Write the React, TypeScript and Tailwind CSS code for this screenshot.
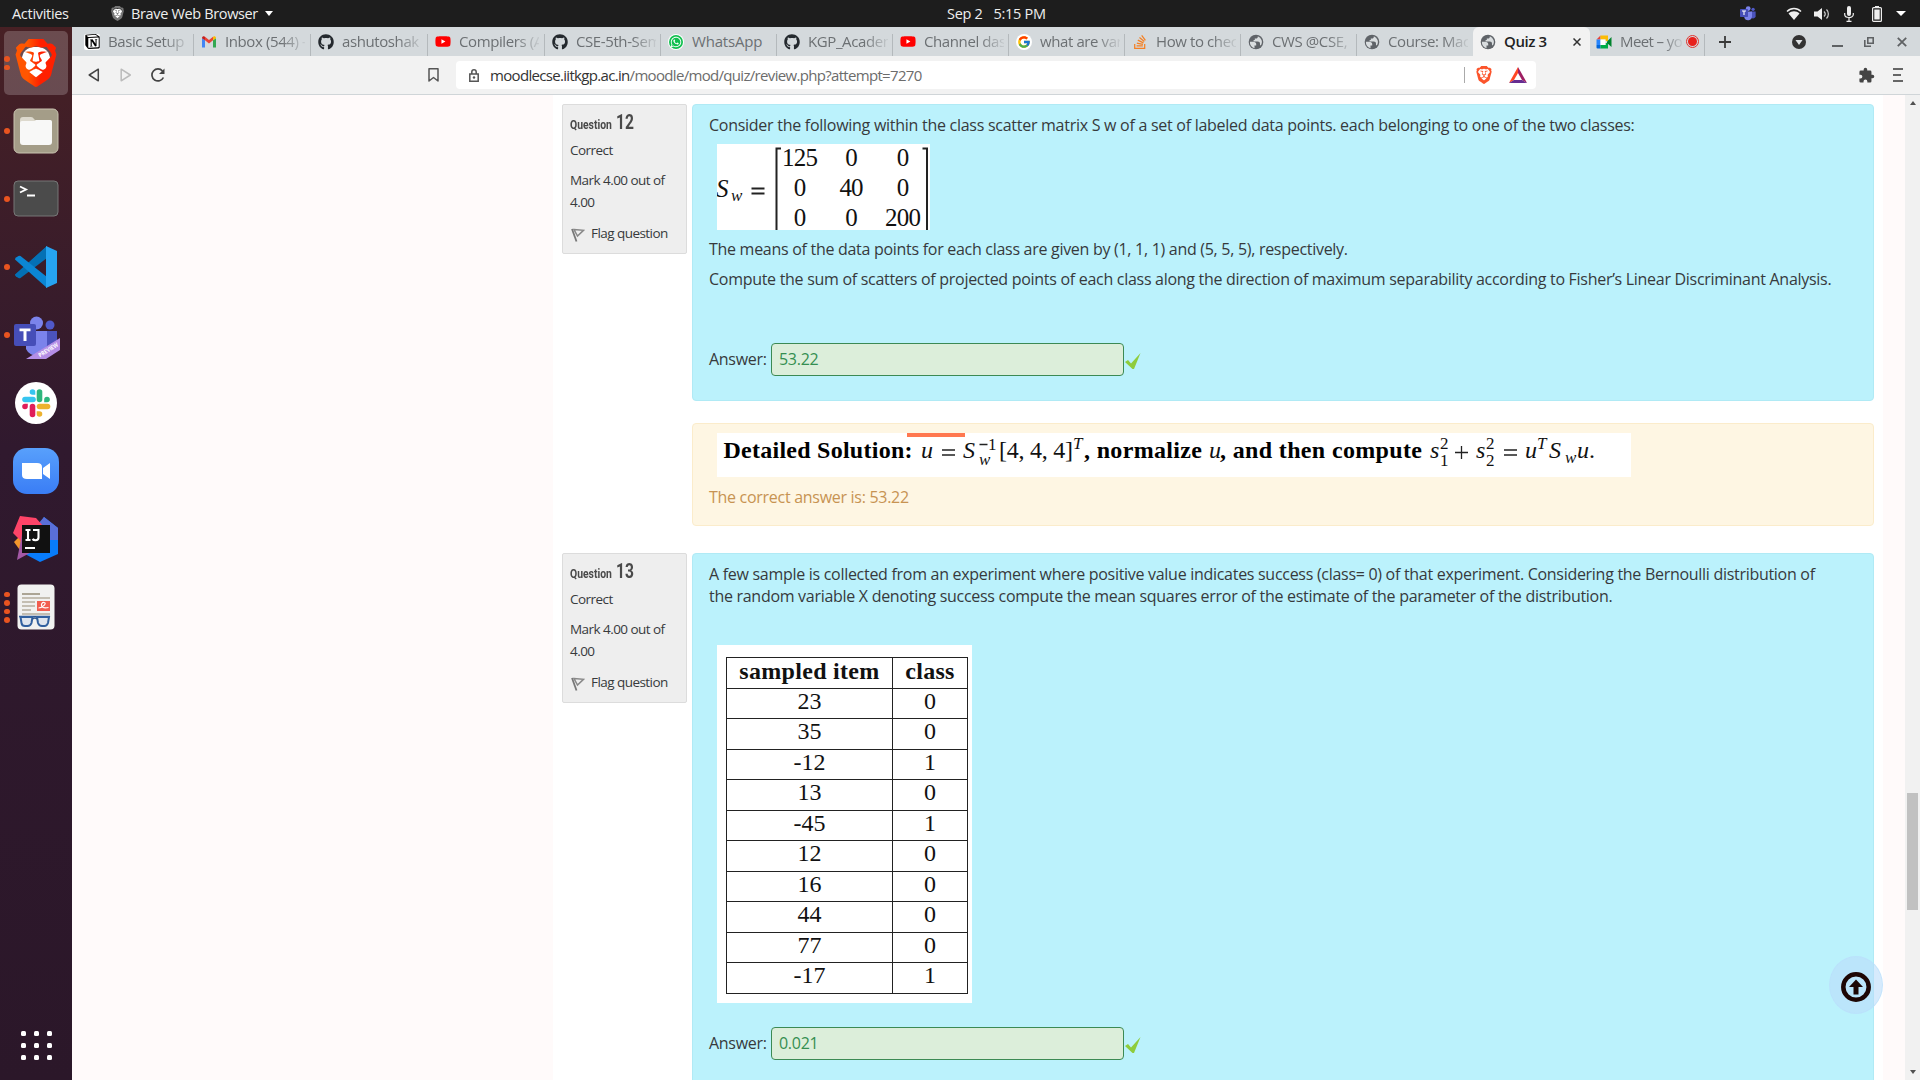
import React from "react";
import { SiBrave, SiNotion } from "react-icons/si";
import { FaGithub, FaYoutube, FaWhatsapp, FaStackOverflow } from "react-icons/fa";
import { FcGoogle } from "react-icons/fc";

const UI = "font-['Open_Sans','Noto_Sans',sans-serif]";

/* ---------- small icons ---------- */

function Globe() {
  return (
    <svg viewBox="0 0 16 16" className="size-4 shrink-0">
      <circle cx="8" cy="8" r="7.300" fill="#5f6368" />
      <path d="M1.900 7.800h3.300c1.800 0 3 .900 3 2.300v1.300H6.500v2.800A6.300 6.300 0 011.900 7.800z" fill="#d9dddf" />
      <path d="M9.800 2.200v.900c0 .900-.700 1.500-1.600 1.500H6.800v1.500H5.600v1.400h4.200c1.300 0 2.200.900 2.200 2.200v1.500h1a6.200 6.200 0 00-3.200-9z" fill="#d9dddf" />
    </svg>
  );
}

function Gmail() {
  return (
    <svg viewBox="0 0 16 16" className="size-4">
      <path d="M1 13.500V4l3 2.300v7.200z" fill="#4285f4" />
      <path d="M12 13.500V6.300L15 4v9.500z" fill="#34a853" />
      <path d="M4 6.300V2.800L8 6l4-3.200v3.500L8 9.500z" fill="#ea4335" />
      <path d="M1 4.200C1 2.300 3 1.800 4 2.800v3.500z" fill="#c5221f" />
      <path d="M15 4.200c0-1.900-2-2.400-3-1.400v3.500z" fill="#fbbc04" />
    </svg>
  );
}

function YouTube() {
  return (
    <span className="relative flex size-4 items-center justify-center">
      <span className="absolute size-1.5 bg-white" />
      <FaYoutube className="relative size-[17px] text-[#f00]" />
    </span>
  );
}

function WhatsApp() {
  return (
    <span className="flex size-4 items-center justify-center rounded-full bg-white">
      <span className="flex size-3.5 items-center justify-center rounded-full bg-[#10bf4f]">
        <FaWhatsapp className="size-3 text-white" />
      </span>
    </span>
  );
}

function Google() {
  return (
    <span className="flex size-4 items-center justify-center rounded-full bg-white">
      <FcGoogle className="size-[14px]" />
    </span>
  );
}

function Meet() {
  return (
    <svg viewBox="0 0 16 16" className="size-4 shrink-0">
      <path d="M.500 5.500l4-4v4z" fill="#ea4335" />
      <path d="M4.500 1.500H12v5.500H9.500V5.500h-5z" fill="#fbbc04" />
      <path d="M.500 5.500h4v5.500h-4z" fill="#2684fc" />
      <path d="M.500 11h4v3.500h-3a1 1 0 01-1-1z" fill="#0066da" />
      <path d="M4.500 14.500V11h5V9H12v5.500z" fill="#00ac47" />
      <path d="M11 7.500l4.500-4.500v10L11 9z" fill="#00832d" />
      <path d="M4.500 5.500h5V11h-5z" fill="#fff" />
    </svg>
  );
}

function Teams({ className }: { className: string }) {
  return (
    <svg viewBox="0 0 44 44" className={className}>
      <circle cx="36" cy="9" r="4.500" fill="#5059c9" />
      <path d="M31 15h12v13a7 7 0 01-12 4z" fill="#4b53bc" />
      <circle cx="22.500" cy="7" r="6.500" fill="#7b83eb" />
      <path d="M12 15h21v14a11 11 0 01-21 4z" fill="#7b83eb" />
      <rect x="0" y="8" width="22" height="22" rx="2" fill="#464eb8" />
      <path d="M5.500 12.500h11v2.800h-4V25H9.500v-9.700h-4z" fill="#fff" />
    </svg>
  );
}

/* ---------- system bar ---------- */

function TopBar() {
  return (
    <header className={`flex h-[27px] shrink-0 items-center bg-[#1d1d1d] text-[14.500px] text-[#eee] ${UI}`}>
      <span className="w-[98px] pl-3 tracking-[-0.3px] whitespace-nowrap">Activities</span>
      <span className="relative mr-[6px] ml-3 flex">
        <span className="absolute inset-x-[3px] top-[3px] h-[9px] rounded-[3px] bg-white" />
        <SiBrave className="relative size-[15px] text-[#777]" />
      </span>
      <span className="w-[134px] tracking-[-0.35px] whitespace-nowrap">Brave Web Browser</span>
      <span className="h-0 w-0 border-x-[4.500px] border-t-[5px] border-x-transparent border-t-white" />
      <span className="ml-[674px] tracking-[-0.3px]">Sep 2</span>
      <span className="ml-[11px] tracking-[-0.3px]">5:15 PM</span>
      <span className="ml-auto flex items-center pr-[14px]">
        <Teams className="mr-[30px] size-4" />
        <svg viewBox="0 0 16 14" className="mr-3 h-[14px] w-4">
          <path d="M1 4.500C5 .500 11 .500 15 4.500" fill="none" stroke="#eee" strokeWidth="1.500" />
          <path d="M2.500 6.500C5.500 3.500 10.500 3.500 13.500 6.500L8 13z" fill="#eee" />
        </svg>
        <svg viewBox="0 0 16 14" className="mr-[14px] h-[14px] w-4">
          <path d="M0 4.500h3.500L8 1v12L3.500 9.500H0z" fill="#eee" />
          <path d="M10 4.500c1.500 1.500 1.500 3.500 0 5M12.500 2.500c2.500 2.500 2.500 6.500 0 9" fill="none" stroke="#ccc" strokeWidth="1.200" />
        </svg>
        <svg viewBox="0 0 10 16" className="mr-[18px] h-4 w-[10px]">
          <rect x="3" y="0" width="4" height="10" rx="2" fill="#eee" />
          <path d="M.700 7v1.500c0 4 8.600 4 8.600 0V7M5 12v3M2.500 15.300h5" fill="none" stroke="#eee" strokeWidth="1.200" />
        </svg>
        <svg viewBox="0 0 10 16" className="mr-[14px] h-4 w-[10px]">
          <rect x="3" y="0" width="4" height="2" fill="#eee" />
          <rect x=".600" y="1.600" width="8.800" height="13.800" rx="1" fill="none" stroke="#eee" strokeWidth="1.200" />
          <rect x="2.300" y="3.500" width="5.400" height="10" fill="#eee" />
        </svg>
        <span className="h-0 w-0 border-x-[5px] border-t-[5px] border-x-transparent border-t-white" />
      </span>
    </header>
  );
}

/* ---------- dock ---------- */

function DockItem({ dots = 0, active = false, children }: { dots?: number; active?: boolean; children: React.ReactNode }) {
  return (
    <div className="relative flex h-[68px] w-[72px] shrink-0 items-center justify-center">
      {active && <span className="absolute inset-x-1 inset-y-0.5 rounded-[5px] bg-white/20" />}
      <span className="absolute left-1 flex h-full flex-col items-center justify-center gap-[3px]">
        {Array.from({ length: dots }, (_, i) => (
          <span key={i} className="size-[5.500px] rounded-full bg-[#e95420]" />
        ))}
      </span>
      <span className="relative flex">{children}</span>
    </div>
  );
}

function Dock() {
  return (
    <nav className="flex w-[72px] shrink-0 flex-col bg-linear-to-b from-[#472024] via-[#30192e] via-40% to-[#2b1729] pt-0.5">
      <DockItem dots={2} active>
        <span className="absolute inset-x-2.5 top-2 h-[34px] rounded-[12px] bg-white" />
        <svg width="0" height="0" className="absolute">
          <defs>
            <linearGradient id="lion" x1="0" x2="1" y1="0" y2="0">
              <stop offset="0.3" stopColor="#ff5601" />
              <stop offset="0.6" stopColor="#ff2000" />
            </linearGradient>
          </defs>
        </svg>
        <SiBrave className="relative size-12 [&_path]:fill-[url(#lion)]" />
      </DockItem>
      <DockItem dots={1}>
        <svg viewBox="0 0 46 46" className="size-[46px]">
          <rect x="1" y="1" width="44" height="44" rx="5" fill="#a49d88" stroke="#c9c3b0" />
          <path d="M7 12q0-3 3-3h8q2 0 3 2l1 1h14q3 0 3 3v7H7z" fill="#ddd9cd" />
          <path d="M7 15q0-2 2-2h13l1-1h14q2 0 2 2v20q0 3-3 3H10q-3 0-3-3z" fill="#f8f8f7" />
        </svg>
      </DockItem>
      <DockItem dots={1}>
        <svg viewBox="0 0 46 38" className="h-[38px] w-[46px]">
          <rect x="1" y="1" width="44" height="35" rx="4" fill="#4b4b4b" stroke="#777" />
          <path d="M7 6.500l6 3-6 3M14 15.500h8" fill="none" stroke="#fff" strokeWidth="1.900" />
        </svg>
      </DockItem>
      <DockItem dots={1}>
        <svg viewBox="0 0 42 42" className="size-[42px]">
          <path d="M0 29L4 32 32 11V0z" fill="#0065a9" />
          <path d="M0 28.500q0 1 1 2L3.500 32q1 .500 2 0L32 12V0z" fill="#0470b5" />
          <path d="M0 13.500q0-1 1-2L3.500 10q1-.500 2 0L32 31v11z" fill="#0b86d4" />
          <path d="M31 0l11 5v32l-11 5z" fill="#26a4f2" />
        </svg>
      </DockItem>
      <DockItem dots={1}>
        <span className="relative top-[3px] flex">
          <Teams className="size-11" />
          <svg viewBox="0 0 34 21" className="absolute top-[22px] left-3 h-[21px] w-[34px]">
            <path d="M0 21L34 0v12L20 21z" fill="#b48ee6" />
            <text x="14" y="19.500" transform="rotate(-32 14 19.500)" fontSize="6" fontWeight="700" fill="#fff" fontFamily="Open Sans" textLength="22" lengthAdjust="spacingAndGlyphs">
              PREVIEW
            </text>
          </svg>
        </span>
      </DockItem>
      <DockItem>
        <svg viewBox="0 0 42 42" className="size-[42px]">
          <circle cx="21" cy="21" r="21" fill="#fff" />
          <g strokeWidth="5.600" strokeLinecap="round">
            <path d="M10 17.500h8" stroke="#36c5f0" />
            <path d="M24.500 10v7.500" stroke="#2eb67d" />
            <path d="M24.500 24.500h8" stroke="#ecb22e" />
            <path d="M17.500 24.500v8" stroke="#e01e5a" />
          </g>
          <path d="M20.300 12.800V10a2.800 2.800 0 10-2.800 2.800z" fill="#36c5f0" />
          <path d="M29.200 20.300H32a2.800 2.800 0 10-2.800-2.800z" fill="#2eb67d" />
          <path d="M21.700 29.200V32a2.800 2.800 0 102.800-2.800z" fill="#ecb22e" />
          <path d="M12.800 21.700H10a2.800 2.800 0 102.800 2.800z" fill="#e01e5a" />
        </svg>
      </DockItem>
      <DockItem>
        <svg viewBox="0 0 46 46" className="size-[46px]">
          <defs>
            <linearGradient id="cam" x1="0" x2="0" y1="0" y2="1">
              <stop offset="0" stopColor="#58a0fc" />
              <stop offset="1" stopColor="#3a7df5" />
            </linearGradient>
          </defs>
          <rect width="46" height="46" rx="14" fill="url(#cam)" />
          <path d="M9 15h15q5 0 5 4v12H14q-5 0-5-4zM30 20l7-5v16l-7-5z" fill="#fff" />
        </svg>
      </DockItem>
      <DockItem>
        <svg viewBox="0 0 46 46" className="size-[46px]">
          <path d="M1 26l8 11 10-12-8-9z" fill="#f3962c" />
          <path d="M27 7l4-6 14 11v26L27 46 12 38z" fill="#087cfa" />
          <path d="M25 8l6-7 14 11v12L27 24z" fill="#5a6fd8" />
          <path d="M0 17L7 0l16 2 8 9-8 14-11-3-2 5z" fill="#fe4468" />
          <path d="M4 44l5-26 15 15z" fill="#a358a5" />
          <rect x="9" y="9" width="28" height="28" fill="#111" />
          <path d="M12.500 14h5M12.500 24h5M15 14v10M20 14h5.500v7.500q0 2.700-3 2.700-2 0-3-1.200" fill="none" stroke="#fff" strokeWidth="2.100" />
          <path d="M12 31h10v2H12z" fill="#fff" />
        </svg>
      </DockItem>
      <DockItem dots={4}>
        <svg viewBox="0 0 38 46" className="h-[46px] w-[38px]">
          <rect x=".500" y=".500" width="37" height="45" rx="4" fill="#f1f1f0" />
          <path d="M5 10h18" stroke="#aca595" strokeWidth="2" />
          <path d="M5 14h28M5 18h13M5 22h13M5 26h9M5 30h28" stroke="#c4beb2" strokeWidth="2" />
          <rect x="20" y="17" width="13" height="10" fill="#f15d4f" />
          <path d="M21.500 24c4 0 9-5 5.500-5.500s-4.500 7 4.500 5" fill="none" stroke="#fff" strokeWidth="1.200" />
          <path d="M2 32.500h31" stroke="#31558c" strokeWidth="1.500" />
          <path d="M3.500 33h12l-1 6q-1 3-4 3H8q-3 0-3.500-3zM20 33h12l-1 6q-1 3-3.500 3H25q-3 0-4-3z" fill="#dfe5ee" stroke="#31609f" strokeWidth="2" />
          <path d="M15.500 35q2.500-2 4.500 0" fill="none" stroke="#31558c" strokeWidth="1.600" />
        </svg>
      </DockItem>
      <div className="mt-auto mb-5 grid grid-cols-3 gap-x-2 gap-y-[7px] self-center">
        {Array.from({ length: 9 }, (_, i) => (
          <span key={i} className="size-[5px] rounded-[1.500px] bg-white" />
        ))}
      </div>
    </nav>
  );
}

/* ---------- browser chrome ---------- */

const github = <FaGithub className="size-4 text-[#24292e]" />;

const tabs: { label: string; icon: React.ReactNode }[] = [
  {
    label: "Basic Setup",
    icon: (
      <span className="flex size-4 items-center justify-center rounded-[2px] bg-white">
        <SiNotion className="size-[15px] text-black" />
      </span>
    ),
  },
  { label: "Inbox (544) -", icon: <Gmail /> },
  { label: "ashutoshak", icon: github },
  { label: "Compilers (A", icon: <YouTube /> },
  { label: "CSE-5th-Sem", icon: github },
  { label: "WhatsApp", icon: <WhatsApp /> },
  { label: "KGP_Academ", icon: github },
  { label: "Channel das", icon: <YouTube /> },
  { label: "what are var", icon: <Google /> },
  { label: "How to chec", icon: <FaStackOverflow className="size-4 text-[#f48024]" /> },
  { label: "CWS @CSE, I", icon: <Globe /> },
  { label: "Course: Mac", icon: <Globe /> },
];

const FADE = "[mask-image:linear-gradient(to_right,black_70%,transparent_104%)]";

function TabStrip() {
  return (
    <div className={`flex h-[29px] shrink-0 items-center bg-[#d4d9dc] pl-[5px] text-[15px] text-[#6c7073] ${UI}`}>
      {tabs.map((t, i) => (
        <div key={i} className={`flex h-full shrink-0 items-center pl-[7px] ${i < 4 ? "w-[117px]" : "w-[116px]"}`}>
          <span className="flex w-4 shrink-0">{t.icon}</span>
          <span className={`ml-2 w-[80px] overflow-hidden whitespace-nowrap ${t.label === "WhatsApp" ? "tracking-[-0.2px]" : `tracking-[-0.4px] ${FADE}`}`}>{t.label}</span>
          {i < 11 && <span className="ml-auto h-[22px] w-px self-end bg-[#b4b9bc]" />}
        </div>
      ))}
      <div className="flex h-full w-[117px] shrink-0 items-center rounded-t-md bg-[#f2f2f2] pl-[7px] text-[#222]">
        <Globe />
        <span className="ml-2 grow font-semibold tracking-[-0.4px]">Quiz 3</span>
        <svg viewBox="0 0 8 8" className="mr-[9px] size-2">
          <path d="M.500 .500l7 7M7.500 .500l-7 7" stroke="#333" strokeWidth="1.500" />
        </svg>
      </div>
      <div className="flex h-full w-[115px] shrink-0 items-center pl-[6px]">
        <Meet />
        <span className={`ml-2 w-[62px] overflow-hidden tracking-[-0.6px] whitespace-nowrap ${FADE}`}>Meet – yo</span>
        <span className="ml-1 flex size-[13px] items-center justify-center rounded-full border border-[#e0352f]">
          <span className="size-[9px] rounded-full bg-[#e8201c]" />
        </span>
        <span className="ml-auto h-[22px] w-px self-end bg-[#b4b9bc]" />
      </div>
      <svg viewBox="0 0 12 12" className="ml-[14px] size-3">
        <path d="M6 0v12M0 6h12" stroke="#3a3a3a" strokeWidth="1.800" />
      </svg>
      <div className="mr-[13px] ml-auto flex items-center">
        <svg viewBox="0 0 14 14" className="mr-[26px] size-[14px]">
          <circle cx="7" cy="7" r="7" fill="#333" />
          <path d="M3.500 5h7L7 10z" fill="#e0e4e6" />
        </svg>
        <span className="mt-2 mr-[21px] h-0.5 w-[11px] bg-[#5f6264]" />
        <svg viewBox="0 0 10 10" className="mr-[23px] size-[10px]">
          <path d="M3.800 .800h5.400v5.400H3.800zM.800 3v6.200H7" fill="none" stroke="#5f6264" strokeWidth="1.600" />
        </svg>
        <svg viewBox="0 0 10 10" className="size-[10px]">
          <path d="M.800 .800l8.400 8.400M9.200 .800L.800 9.200" stroke="#5f6264" strokeWidth="1.800" />
        </svg>
      </div>
    </div>
  );
}

function Toolbar() {
  return (
    <div className={`flex h-[39px] shrink-0 items-center border-b border-[#d0d5d8] bg-[#f2f2f2] ${UI}`}>
      <svg viewBox="0 0 12 14" className="ml-4 h-[14px] w-3">
        <path d="M10.300 1.200v11.600L1.200 7z" fill="none" stroke="#444" strokeWidth="1.500" strokeLinejoin="round" />
      </svg>
      <svg viewBox="0 0 12 14" className="ml-5 h-[14px] w-3">
        <path d="M1.200 1.200v11.600L10.300 7z" fill="none" stroke="#bbb" strokeWidth="1.500" strokeLinejoin="round" />
      </svg>
      <svg viewBox="0 0 14 14" className="ml-[19px] size-[14px]">
        <path d="M12.400 9.500A6 6 0 1111.500 3" fill="none" stroke="#444" strokeWidth="1.700" />
        <path d="M13.500 .500v5.500H8z" fill="#444" />
      </svg>
      <svg viewBox="0 0 11 14" className="ml-[263px] h-[14px] w-[11px]">
        <path d="M1 .800h9v12.200L5.500 9.500 1 13z" fill="none" stroke="#555" strokeWidth="1.500" strokeLinejoin="round" />
      </svg>
      <div className="ml-[17px] flex h-7 w-[1080px] items-center rounded-[4px] bg-white pl-[13px] text-[15px]">
        <svg viewBox="0 0 10 13" className="h-[13px] w-[10px]">
          <path d="M.800 5h8.400v7.200H.800zM2.800 5V3a2.200 2.200 0 014.400 0v2" fill="none" stroke="#555" strokeWidth="1.500" />
          <circle cx="5" cy="8.500" r="1.200" fill="#555" />
        </svg>
        <span className="ml-[11px] tracking-[-0.680px] whitespace-nowrap text-[#6c6c6c]">
          <span className="text-[#333]">moodlecse.iitkgp.ac.in</span>/moodle/mod/quiz/review.php?attempt=7270
        </span>
        <span className="ml-auto h-4 w-px bg-[#aaa]" />
        <SiBrave className="ml-[10px] size-[18px] text-[#fb542b]" />
        <svg viewBox="0 0 18 16" className="mr-[9px] ml-4 h-4 w-[18px]">
          <path d="M9 0L0 16l5-3 4-7z" fill="#ff4724" />
          <path d="M9 0l9 16-5-3-4-7z" fill="#9e1f63" />
          <path d="M0 16h18l-5-3H5z" fill="#662d91" />
        </svg>
      </div>
      <svg viewBox="0 0 24 24" className="ml-auto size-[17px]">
        <path fill="#444" d="M20.500 11H19V7a2 2 0 00-2-2h-4V3.500a2.500 2.500 0 00-5 0V5H4a2 2 0 00-2 2v3.800h1.500a2.700 2.700 0 010 5.400H2V20a2 2 0 002 2h3.800v-1.500a2.700 2.700 0 015.400 0V22H17a2 2 0 002-2v-4h1.500a2.500 2.500 0 000-5z" />
      </svg>
      <div className="mr-[17px] ml-[18px] flex w-[10px] flex-col gap-1">
        <span className="h-0.5 bg-[#666]" />
        <span className="h-0.5 w-2 bg-[#666]" />
        <span className="h-0.5 bg-[#666]" />
      </div>
    </div>
  );
}

/* ---------- quiz ---------- */

function QuestionInfo({ n }: { n: number }) {
  return (
    <aside className="h-[150px] w-[125px] shrink-0 rounded-[2px] border border-[#dcdcdc] bg-[#eee] pl-[7px] text-[13.500px] leading-[22px] tracking-[-0.550px] text-[#373a3c]">
      <h3 className="flex h-[30px] origin-left scale-x-[0.8] items-baseline gap-[5px] pt-[7px] font-['Roboto',sans-serif] text-[13px] font-bold tracking-normal text-[#4a4a4a]">
        Question <span className="text-[19.500px]">{n}</span>
      </h3>
      <p className="mt-1">Correct</p>
      <p className="mt-2 w-[110px]">Mark 4.00 out of 4.00</p>
      <p className="mt-[9px] flex items-center">
        <svg viewBox="0 0 14 16" className="mt-1 mr-1.5 ml-px h-4 w-[14px]">
          <path d="M1 2l4.500 12.500" stroke="#777" strokeWidth="1.800" fill="none" />
          <path d="M3 2.500l9.500 .800L6.500 9z" fill="#eee" stroke="#888" strokeWidth="1.500" />
        </svg>
        Flag question
      </p>
    </aside>
  );
}

function Answer({ value }: { value: string }) {
  return (
    <div className="flex h-[33px] items-center">
      <label className="w-[62px] pb-px">Answer:</label>
      <div className="flex h-[33px] w-[353px] items-center rounded-[4px] border border-[#3c8a54] bg-[#dceeda] pb-px pl-[7px] text-[#358e51]">{value}</div>
      <svg viewBox="0 0 16 16" className="mt-0.5 ml-px size-4">
        <path d="M0 9l3-2 3 3.500L15.500 0 9 16H7.500z" fill="#8fcc3c" />
      </svg>
    </div>
  );
}

const SERIF = "font-['Liberation_Serif',serif] tracking-normal";

function ScatterMatrix() {
  const rows = [
    ["125", "0", "0"],
    ["0", "40", "0"],
    ["0", "0", "200"],
  ];
  return (
    <svg viewBox="0 0 213 86" className={`ml-2 block h-[86px] w-[213px] bg-white ${SERIF}`} fontSize="25" fill="#111">
      <text x="-1" y="52.500" fontStyle="italic">S</text>
      <text x="14" y="56.500" fontStyle="italic" fontSize="17">w</text>
      <path d="M34.500 44.500h13M34.500 49.500h13M64 4.500h-4.500V86M205.500 4.500h4.500V86" fill="none" stroke="#222" strokeWidth="2" />
      {rows.map((r, i) =>
        r.map((v, j) => (
          <text key={`${i}${j}`} x={83 + j * 51.500} y={22 + i * 30} textAnchor="middle" textLength={v.length * 12}>
            {v}
          </text>
        )),
      )}
    </svg>
  );
}

function SolutionFormula() {
  return (
    <svg viewBox="0 0 914 44" className={`ml-2 block h-11 w-[914px] bg-white ${SERIF}`} fontSize="24" fill="#111">
      <path d="M190 0h58v4h-58z" fill="#ff7850" />
      <g transform="translate(0 -1)">
        <g fontWeight="700" fill="#000">
          <text x="6.500" y="26" textLength="189">Detailed Solution:</text>
          <text x="367" y="26" textLength="118">, normalize</text>
          <text x="503" y="26" textLength="202">, and then compute</text>
        </g>
        <g fontStyle="italic">
          <text x="204" y="26">u</text>
          <text x="246" y="26">S</text>
          <text x="262" y="33" fontSize="17">w</text>
          <text x="356" y="17" fontSize="17">T</text>
          <text x="492" y="26">u</text>
          <text x="713" y="26">s</text>
          <text x="759" y="26">s</text>
          <text x="808" y="26">u</text>
          <text x="820" y="17" fontSize="17">T</text>
          <text x="832" y="26">S</text>
          <text x="848" y="31" fontSize="17">w</text>
          <text x="860" y="26">u</text>
        </g>
        <path d="M225 18h13M225 23h13M787 18h13M787 23h13M738 20.500h13M744.500 14v13M262.500 12.500h8" stroke="#222" strokeWidth="1.300" />
        <text x="271" y="18" fontSize="17">1</text>
        <text x="282" y="26" textLength="74">[4, 4, 4]</text>
        <text x="723" y="17" fontSize="17">2</text>
        <text x="723" y="34" fontSize="17">1</text>
        <text x="769" y="17" fontSize="17">2</text>
        <text x="769" y="34" fontSize="17">2</text>
        <text x="872" y="26">.</text>
      </g>
    </svg>
  );
}

const samples: [string, string][] = [
  ["23", "0"],
  ["35", "0"],
  ["-12", "1"],
  ["13", "0"],
  ["-45", "1"],
  ["12", "0"],
  ["16", "0"],
  ["44", "0"],
  ["77", "0"],
  ["-17", "1"],
];

function SampleTable() {
  return (
    <div className={`ml-2 h-[358px] w-[255px] bg-white pt-3 pl-[9px] text-[24px] leading-[25px] text-[#111] ${SERIF}`}>
      <div className="grid h-[337px] w-[242px] auto-rows-fr grid-cols-[166px_1fr] border-t border-l border-[#222] text-center">
        <div className="border-r border-b border-[#222] leading-[26px] font-bold tracking-[0.300px]">sampled item</div>
        <div className="border-r border-b border-[#222] leading-[26px] font-bold tracking-[0.300px]">class</div>
        {samples.map(([a, b], i) => (
          <React.Fragment key={i}>
            <div className="border-r border-b border-[#222]">{a}</div>
            <div className="border-r border-b border-[#222]">{b}</div>
          </React.Fragment>
        ))}
      </div>
    </div>
  );
}

function QuizPage() {
  return (
    <div className="flex min-h-0 grow bg-[#fffafa] font-['Open_Sans',sans-serif] text-[16px] leading-[22px] tracking-[-0.288px] text-[#373a3c]">
      <main className="ml-[481px] w-[1330px] shrink-0 overflow-hidden bg-white pt-[9px] pl-[9px]">
        <section className="flex gap-[5px]">
          <QuestionInfo n={12} />
          <div className="w-[1182px]">
            <div className="h-[297px] rounded-[4px] border border-[#b0eaf5] bg-[#bbf2fc] pt-[9px] pl-4">
              <p className="tracking-[-0.270px]">Consider the following within the class scatter matrix S w of a set of labeled data points. each belonging to one of the two classes:</p>
              <div className="mt-2">
                <ScatterMatrix />
              </div>
              <p className="mt-2">The means of the data points for each class are given by (1, 1, 1) and (5, 5, 5), respectively.</p>
              <p className="mt-2 mb-[53px] whitespace-nowrap">Compute the sum of scatters of projected points of each class along the direction of maximum separability according to Fisher’s Linear Discriminant Analysis.</p>
              <Answer value="53.22" />
            </div>
            <div className="mt-[22px] h-[103px] rounded-[4px] border border-[#fbeccb] bg-[#fef6e3] pt-[9px] pl-4">
              <SolutionFormula />
              <p className="mt-[9px] text-[#c79352]">The correct answer is: 53.22</p>
            </div>
          </div>
        </section>
        <section className="mt-[27px] flex gap-[5px]">
          <QuestionInfo n={13} />
          <div className="h-[560px] w-[1182px] rounded-[4px] border border-[#b0eaf5] bg-[#bbf2fc] pt-[9px] pl-4">
            <p className="mb-[38px] whitespace-nowrap">
              A few sample is collected from an experiment where positive value indicates success (class= 0) of that experiment. Considering the Bernoulli distribution of
              <br />
              the random variable X denoting success compute the mean squares error of the estimate of the parameter of the distribution.
            </p>
            <SampleTable />
            <div className="mt-6">
              <Answer value="0.021" />
            </div>
          </div>
        </section>
      </main>
      <div className="ml-auto flex w-[15px] flex-col items-center bg-[#f1f1f1]">
        <span className="mt-1.5 h-0 w-0 border-x-[3.500px] border-b-4 border-x-transparent border-b-[#505050]" />
        <span className="mt-[688px] h-[117px] w-[11px] bg-[#c1c1c1]" />
        <span className="mt-auto mb-1.5 h-0 w-0 border-x-[3.500px] border-t-4 border-x-transparent border-t-[#505050]" />
      </div>
    </div>
  );
}

export default function App() {
  return (
    <div className="relative flex h-[1080px] w-[1920px] flex-col overflow-hidden">
      <TopBar />
      <div className="flex min-h-0 grow">
        <Dock />
        <div className="flex w-[1848px] flex-col">
          <TabStrip />
          <Toolbar />
          <QuizPage />
        </div>
      </div>
      <div className="absolute top-[956px] left-[1829px] flex h-[58px] w-[54px] items-center justify-center rounded-[50%] border border-[#b9dffb]/60 bg-[#badcfa]/60">
        <svg viewBox="0 0 30 30" className="mt-[3px] size-[30px]">
          <circle cx="15" cy="15" r="12.700" fill="none" stroke="#1d0705" strokeWidth="4.500" />
          <path d="M15 7.500l7 7.500h-4.500v7.500h-5V15H8z" fill="#1d0705" />
        </svg>
      </div>
    </div>
  );
}
